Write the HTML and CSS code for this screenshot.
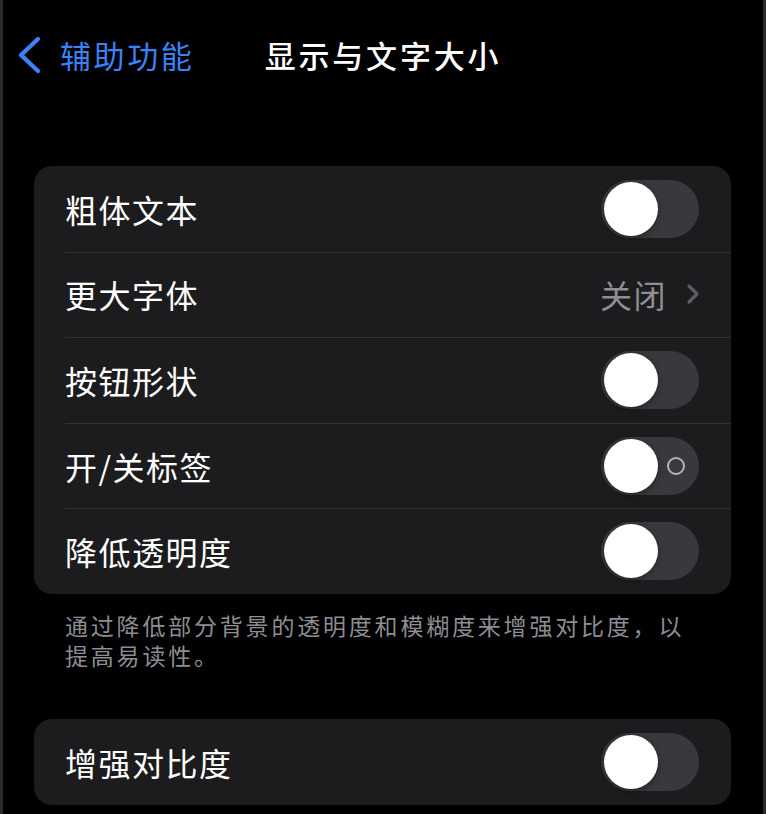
FILE: index.html
```html
<!DOCTYPE html>
<html lang="zh-CN">
<head>
<meta charset="utf-8">
<link rel="stylesheet" href="styles.css">
</head>
<body>
<div class="screen">
  <header class="nav">
    <div class="nav-left">
      <svg class="back-chevron" width="26" height="40" viewBox="0 0 26 40"><path d="M21 4 L4 20 L21 36" fill="none" stroke="#3a82f6" stroke-width="4.4" stroke-linecap="round" stroke-linejoin="round"/></svg>
      <span class="back-label">辅助功能</span>
    </div>
    <h1 class="nav-title">显示与文字大小</h1>
    <div class="nav-right"></div>
  </header>

  <section class="group">
    <div class="row">
      <span class="row-label">粗体文本</span>
      <span class="toggle"><span class="knob"></span></span>
    </div>
    <div class="row">
      <span class="row-label">更大字体</span>
      <span class="row-value">关闭<svg class="disclosure" width="16" height="24" viewBox="0 0 16 24"><path d="M4 4 L12 12 L4 20" fill="none" stroke="#5c5c60" stroke-width="3.2" stroke-linecap="round" stroke-linejoin="round"/></svg></span>
    </div>
    <div class="row">
      <span class="row-label">按钮形状</span>
      <span class="toggle"><span class="knob"></span></span>
    </div>
    <div class="row">
      <span class="row-label">开/关标签</span>
      <span class="toggle"><span class="knob"></span><span class="off-mark"></span></span>
    </div>
    <div class="row">
      <span class="row-label">降低透明度</span>
      <span class="toggle"><span class="knob"></span></span>
    </div>
  </section>
  <p class="footnote">通过降低部分背景的透明度和模糊度来增强对比度，以提高易读性。</p>

  <section class="group group-2">
    <div class="row">
      <span class="row-label">增强对比度</span>
      <span class="toggle"><span class="knob"></span></span>
    </div>
  </section>
</div>
</body>
</html>
```

FILE: styles.css
```css
html, body {
  margin: 0;
  padding: 0;
  background: #000;
}

body {
  font-family: "Noto Sans CJK SC", "Noto Sans", sans-serif;
  color: #fff;
}

.screen {
  width: 766px;
  height: 814px;
  box-sizing: border-box;
  border-left: 3px solid #2b2b2d;
  border-right: 3px solid #2b2b2d;
  background: #000;
  overflow: hidden;
}

.nav {
  height: 110px;
  display: grid;
  grid-template-columns: 1fr auto 1fr;
  align-items: center;
  margin-left: -3px;
  margin-right: -3px;
}

.nav-left {
  display: flex;
  align-items: center;
  padding-left: 17px;
  gap: 17px;
}

.back-chevron {
  display: block;
}

.back-label {
  color: #3a82f6;
  font-size: 31px;
  letter-spacing: 2.6px;
  line-height: 40px;
}

.nav-title {
  margin: 0;
  font-size: 31px;
  font-weight: 500;
  letter-spacing: 2.8px;
  line-height: 40px;
  color: #fff;
}

.group {
  margin: 56px 32px 0 31px;
  background: #1c1c1e;
  border-radius: 18px;
  overflow: hidden;
}

.row {
  height: 85.6px;
  display: flex;
  align-items: center;
  justify-content: space-between;
  padding: 0 32px 0 31px;
  position: relative;
}

.row + .row::before {
  content: "";
  position: absolute;
  top: 0;
  left: 31px;
  right: 0;
  height: 1px;
  background: #333335;
}

.row-label {
  font-size: 32px;
  letter-spacing: 1.5px;
  line-height: 40px;
  color: #fff;
}

.row-value {
  display: flex;
  align-items: center;
  gap: 18px;
  font-size: 32px;
  letter-spacing: 1.5px;
  line-height: 40px;
  color: #8e8e93;
}

.disclosure {
  display: block;
  margin-right: -2px;
}

.toggle {
  width: 98px;
  height: 58px;
  border-radius: 29px;
  background: #39393d;
  position: relative;
  flex: none;
}

.knob {
  position: absolute;
  top: 2px;
  left: 3px;
  width: 54px;
  height: 54px;
  border-radius: 50%;
  background: #fff;
  box-shadow: 0 2px 6px rgba(0, 0, 0, 0.35);
}

.off-mark {
  position: absolute;
  top: 20px;
  left: 66px;
  width: 14px;
  height: 14px;
  border: 2.5px solid #b4b4b8;
  border-radius: 50%;
}

.footnote {
  margin: 16px 0 0 62px;
  width: 628px;
  font-size: 23px;
  letter-spacing: 2.8px;
  line-height: 30px;
  color: #8d8d93;
}

.group-2 {
  margin-top: 49px;
}

.group-2 .row {
  height: 86px;
}
```
